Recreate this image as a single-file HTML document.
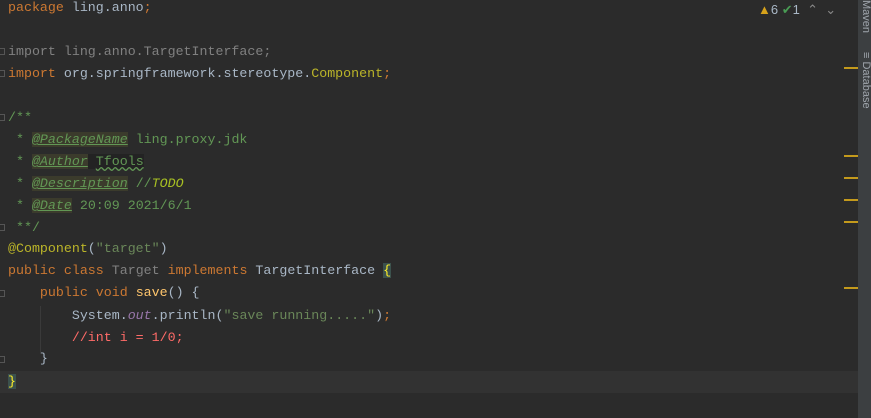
<!DOCTYPE html>
<html><head><style>
body{margin:0;width:871px;height:418px;background:#2b2b2b;overflow:hidden;position:relative;font-family:"Liberation Mono",monospace;font-size:13.3px;color:#a9b7c6}
.l{position:absolute;left:8px;height:22px;line-height:22px;white-space:pre}
.k{color:#cc7832}.g{color:#808080}.y{color:#bbb529}.c{color:#629755}.tag{color:#629755;font-style:italic;text-decoration:underline;background:#3b3b2c}
.s{color:#6a8759}.f{color:#ffc66d}.o{color:#9876aa;font-style:italic}.r{color:#ff6b68}
.m{position:absolute;left:844px;width:14px;height:2px;background:#c49a1c}
.strip{position:absolute;left:858px;top:0;width:13px;height:418px;background:#3c3f41}
.vt{position:absolute;left:860px;color:#a0a6ad;font-family:"Liberation Sans",sans-serif;font-size:11px;writing-mode:vertical-rl}
.fold{position:absolute;left:0;width:5px;height:7px;border:1px solid #555;border-left:none;box-sizing:border-box}
</style></head><body>
<div style="position:absolute;left:0;top:371px;width:858px;height:22px;background:#323232"></div>
<div class="l" style="top:-3px"><span class="k">package</span> ling.anno<span class="k">;</span></div>
<div class="l" style="top:41px"><span class="g">import ling.anno.TargetInterface;</span></div>
<div class="l" style="top:63px"><span class="k">import</span> org.springframework.stereotype.<span class="y">Component</span><span class="k">;</span></div>
<div class="l c" style="top:107px">/**</div>
<div class="l c" style="top:129px"> * <span class="tag">@PackageName</span> ling.proxy.jdk</div>
<div class="l c" style="top:151px"> * <span class="tag">@Author</span><span style="background:#232323"> <span style="text-decoration:underline wavy #629755">Tfools</span></span></div>
<div class="l c" style="top:173px"> * <span class="tag">@Description</span> //<i style="color:#a8c023">TODO</i></div>
<div class="l c" style="top:195px"> * <span class="tag">@Date</span> 20:09 2021/6/1</div>
<div class="l c" style="top:217px"> **/</div>
<div class="l" style="top:238px"><span class="y">@Component</span>(<span class="s">"target"</span>)</div>
<div class="l" style="top:260px"><span class="k">public class</span> <span class="g">Target</span> <span class="k">implements</span> TargetInterface <span style="background:#3b514d;color:#ffef28">{</span></div>
<div class="l" style="top:282px">    <span class="k">public void</span> <span class="f">save</span>() {</div>
<div class="l" style="top:305px">        System.<span class="o">out</span>.println(<span class="s">"save running....."</span>)<span class="k">;</span></div>
<div class="l" style="top:327px">        <span class="r">//int i = 1/0;</span></div>
<div class="l" style="top:348px">    }</div>
<div class="l" style="top:371px"><span style="background:#3b514d;color:#ffef28">}</span></div>
<div style="position:absolute;left:40px;top:306px;width:1px;height:48px;background:#3a3a3a"></div>
<div class="fold" style="top:48px"></div><div class="fold" style="top:70px"></div><div class="fold" style="top:114px"></div><div class="fold" style="top:224px"></div><div class="fold" style="top:290px"></div><div class="fold" style="top:356px"></div>
<div style="position:absolute;left:758px;top:2px;font-family:'Liberation Sans',sans-serif;font-size:13px;color:#a9b7c6;white-space:pre"><span style="color:#d6a21b">▲</span>6 <span style="color:#499c54">✔</span>1  <span style="color:#888">⌃</span>  <span style="color:#888">⌄</span></div>
<div class="strip"></div>
<div class="vt" style="top:0">Maven</div>
<div class="vt" style="top:52px">≡ Database</div>
<div class="m" style="top:67px"></div><div class="m" style="top:155px"></div><div class="m" style="top:177px"></div><div class="m" style="top:199px"></div><div class="m" style="top:221px"></div><div class="m" style="top:287px"></div>
</body></html>
